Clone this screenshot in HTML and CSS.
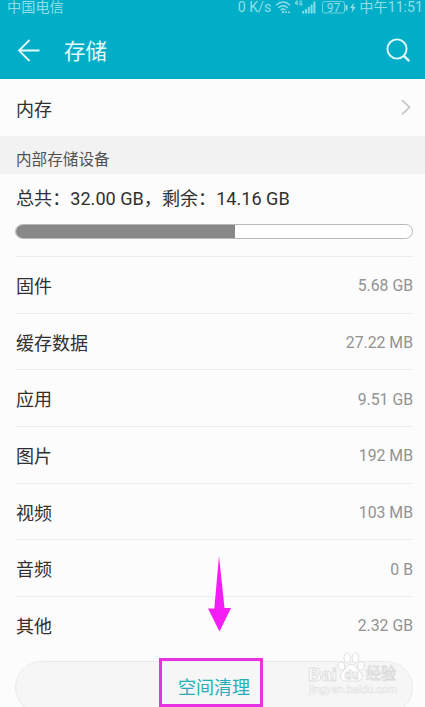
FILE: index.html
```
<!DOCTYPE html>
<html lang="zh-CN">
<head>
<meta charset="utf-8">
<title>存储</title>
<link rel="stylesheet" href="styles.css">
</head>
<body>
<div class="screen">
  <header class="header">
    <div class="status">
      <span class="carrier">中国电信</span>
      <span class="speed">0 K/s</span>
      <svg class="status-icons" width="86" height="16" viewBox="0 0 86 16" fill="none" stroke="currentColor">
        <g stroke-width="1.4">
          <path d="M1 5.2Q8 -1 15 5.2M3.3 7.7Q8 3.6 12.7 7.7M5.5 10Q8 8 10.5 10"/>
          <path d="M10 12.3h6" stroke-dasharray="2 1"/>
        </g>
        <circle cx="8" cy="12" r="1.2" fill="currentColor" stroke="none"/>
        <path d="M22 .5l-2 3h3M22.2.5v5M27 1h-2v4h2V3h-1" stroke-width=".9"/>
        <path d="M28.200 13.500v-2.500M31 13.500v-4.500M33.800 13.500V7M36.600 13.500V4.500M39.400 13.500V1.500" stroke-width="1.900"/>
        <rect x="47.500" y="1.500" width="22" height="11.500" rx="2" stroke-width="1" opacity=".75"/>
        <path d="M71.500 5v5.500" stroke-width="2"/>
        <path d="M79 2.500l-4 5.500h2.500L76.500 13l4.200-6h-2.500z" fill="currentColor" stroke="none"/>
        <text class="battery" x="58.500" y="11.500" text-anchor="middle">97</text>
      </svg>
      <span class="clock">中午11:51</span>
    </div>
    <div class="titlebar">
      <svg class="back" width="24" height="24" viewBox="0 0 24 24" fill="none" stroke="currentColor" stroke-width="1.800"><path d="M12.500 1L2 11.500 12.500 22M2 11.500h20.500"/></svg>
      <h1 class="title">存储</h1>
      <svg class="search" width="26" height="26" viewBox="0 0 26 26" fill="none" stroke="currentColor" stroke-width="1.900"><circle cx="12" cy="11" r="9.600"/><path d="M18.800 17.800l5.500 5.300" stroke-width="2.300"/></svg>
    </div>
  </header>
  <div class="memory">
    <span>内存</span>
    <svg width="10" height="16" viewBox="0 0 10 16" fill="none" stroke="#c9c9c9" stroke-width="1.800"><path d="M1 0L8.500 7.200 1 14.400"/></svg>
  </div>
  <div class="section">内部存储设备</div>
  <div class="summary">
    <div class="total">总共：32.00 GB，剩余：14.16 GB</div>
    <div class="meter"><div class="meter-fill"></div></div>
  </div>
  <ul class="list">
    <li class="row"><span class="label">固件</span><span class="size">5.68 GB</span></li>
    <li class="row"><span class="label">缓存数据</span><span class="size">27.22 MB</span></li>
    <li class="row"><span class="label">应用</span><span class="size">9.51 GB</span></li>
    <li class="row"><span class="label">图片</span><span class="size">192 MB</span></li>
    <li class="row"><span class="label">视频</span><span class="size">103 MB</span></li>
    <li class="row"><span class="label">音频</span><span class="size">0 B</span></li>
    <li class="row"><span class="label">其他</span><span class="size">2.32 GB</span></li>
  </ul>
  <div class="clean">空间清理</div>
  <svg class="pointer" width="24" height="76" viewBox="0 0 24 76"><path d="M12 0L17.500 52H24L12.500 75.500 1 52.500H7.300z" fill="#f51df5"/></svg>
  <div class="highlight"></div>
  <svg class="watermark" width="96" height="46" viewBox="0 0 96 46">
    <g fill="#fff" stroke="#dcdcdc" stroke-width=".9">
      <ellipse cx="34.500" cy="14" rx="3.200" ry="4.200" transform="rotate(-15 34.500 14)"/>
      <ellipse cx="40.300" cy="6" rx="3.300" ry="4.900"/>
      <ellipse cx="48.500" cy="6" rx="3.300" ry="4.900"/>
      <ellipse cx="54" cy="14" rx="3.200" ry="4.200" transform="rotate(15 54 14)"/>
      <path d="M44.300 12.500c4 0 5 4 8 6.700 5 4.300 3 9.800-2 9.800H39c-6 0-7.500-6-2.500-10.200 3-2.500 4-6.300 7.800-6.300z"/>
      <g class="logo-type">
        <text class="bai" x="1" y="28.500" textLength="29" lengthAdjust="spacingAndGlyphs">Bai</text>
        <text class="du" x="37.500" y="26.500" textLength="14" lengthAdjust="spacingAndGlyphs">du</text>
        <text class="jy" x="59" y="27" textLength="30" lengthAdjust="spacingAndGlyphs">经验</text>
      </g>
      <text class="site" x="2" y="41" textLength="88" lengthAdjust="spacingAndGlyphs">jingyan.baidu.com</text>
    </g>
  </svg>
</div>
</body>
</html>
```
FILE: styles.css
```
* { box-sizing: border-box; }
body {
  margin: 0;
  overflow: hidden;
  background: #fcfcfc;
  font-family: Roboto, "Noto Sans CJK SC", sans-serif;
  font-size: 18px;
  color: #303030;
}
.screen {
  position: relative;
  height: 707px;
  overflow: hidden;
  display: flex;
  flex-direction: column;
}
.screen > * { flex-shrink: 0; }
.header {
  height: 79px;
  background: #02aec7;
  color: #e2fbfd;
}
.status {
  display: flex;
  align-items: center;
  height: 15px;
  padding: 0 2px 0 7px;
  font-size: 14.200px;
  line-height: 15px;
  color: #8edee8;
  white-space: nowrap;
}
.speed { margin-left: auto; }
.status-icons { margin-left: 4px; margin-right: -2px; }
.battery { font-size: 12px; fill: currentColor; stroke: none; }
.titlebar {
  display: flex;
  align-items: center;
  height: 64px;
  padding: 7px 14px 0 17px;
}
.title {
  margin: 0 auto 0 23px;
  padding-top: 3px;
  font-size: 21.500px;
  font-weight: 400;
  line-height: 30px;
}
.memory {
  display: flex;
  align-items: center;
  justify-content: space-between;
  height: 57px;
  padding: 0 14px 0 16px;
}
.section {
  height: 38px;
  padding: 9px 16px 0;
  background: #f2f2f2;
  font-size: 15.600px;
  line-height: 31px;
  color: #505050;
}
.summary { height: 82px; padding: 10px 12px 0 15px; }
.total {
  padding-left: 1px;
  height: 30px;
  line-height: 30px;
  font-size: 18.100px;
  white-space: nowrap;
}
.meter {
  height: 15px;
  margin-top: 10px;
  overflow: hidden;
  border: 1px solid #b8b8b8;
  border-radius: 8px;
  background: #fff;
}
.meter-fill { width: 55.200%; height: 100%; background: #888; }
.list { margin: 0 12px 0 15px; padding: 0; list-style: none; }
.row {
  display: flex;
  align-items: center;
  justify-content: space-between;
  height: 56.700px;
  padding-left: 1px;
  padding-top: 2px;
  border-top: 1px solid #ececec;
}
.label { padding-bottom: 2px; }
.size { font-size: 15.800px; color: #929292; }
.clean {
  height: 53px;
  margin: 8px 12px 0 15px;
  border: 1px solid #ebebeb;
  border-radius: 27px;
  background: #f6f6f6;
  text-align: center;
  line-height: 52px;
  color: #27adb8;
}
.pointer { position: absolute; left: 207px; top: 556px; }
.highlight {
  position: absolute;
  left: 159px;
  top: 658px;
  width: 104px;
  height: 49px;
  border: 3px solid #e632e0;
}
.watermark { position: absolute; left: 307px; top: 652px; }
.logo-type { font-family: "Liberation Sans", "Noto Sans CJK SC", sans-serif; font-weight: 700; }
.bai { font-size: 19px; }
.du { font-size: 13px; }
.jy { font-size: 15.500px; font-weight: 400; }
.site { font-family: "Liberation Sans", sans-serif; font-size: 11px; stroke: #e4e4e4; stroke-width: .6px; }
```
